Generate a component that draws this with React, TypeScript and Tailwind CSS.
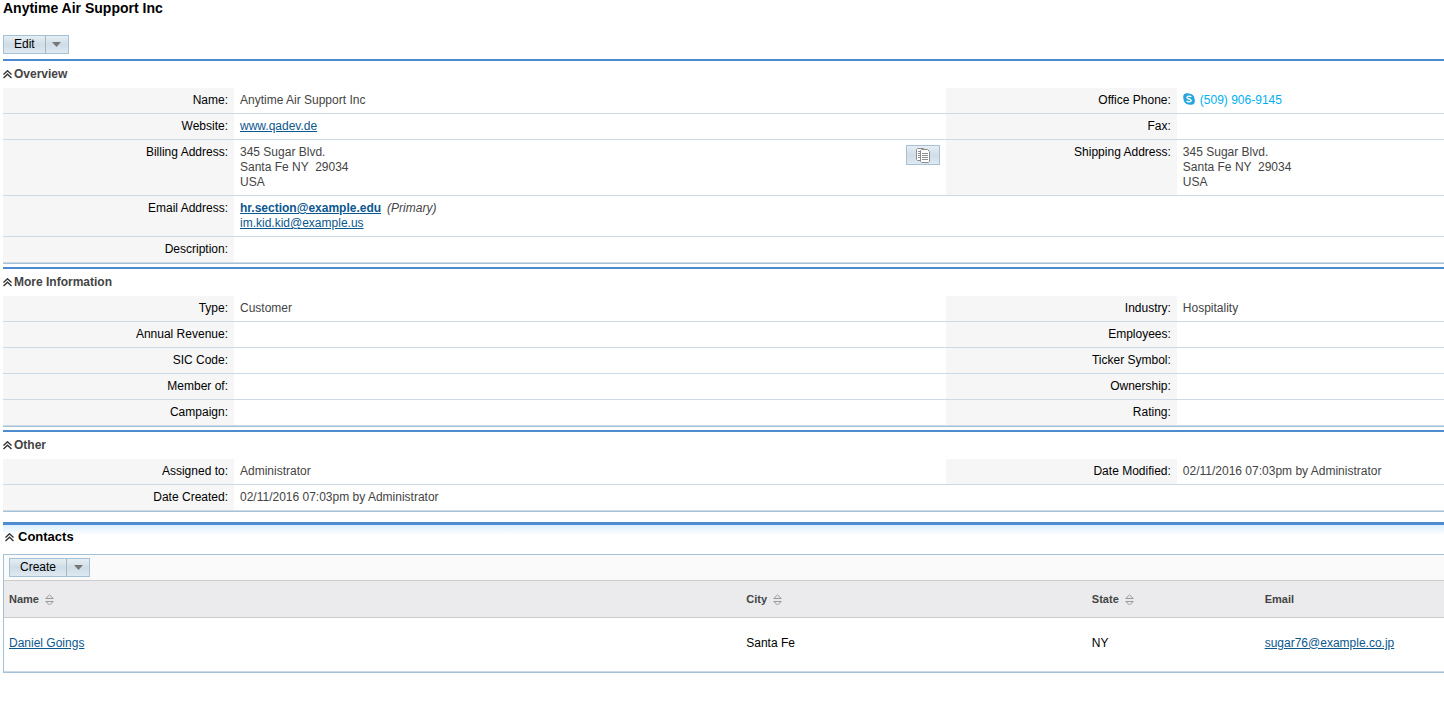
import { ReactNode } from "react";

type Field = { label: string; value?: ReactNode };
type Row = [Field] | [Field, Field];

const linkClass = "text-[#0b578f] underline";

function Chevrons() {
  return (
    <svg width="9" height="9" viewBox="0 0 9 9" fill="none" stroke="#333" strokeWidth="1.4">
      <path d="M0.5 4.5L4.5 0.8L8.5 4.5M0.5 8L4.5 4.3L8.5 8" />
    </svg>
  );
}

function SortIcon() {
  return (
    <svg width="9" height="11" viewBox="0 0 9 11" fill="none" stroke="#999" strokeWidth="1">
      <path d="M0.5 4.5H8.5M1 4.2L4.5 0.9L8 4.2M0.5 7.5H8.5M1 7.8L4.5 11L8 7.8" />
    </svg>
  );
}

function SkypeIcon() {
  return (
    <svg width="12" height="12" viewBox="0 0 12 12">
      <circle cx="3.8" cy="3.8" r="3.6" fill="#27a5dc" />
      <circle cx="8.2" cy="8.2" r="3.6" fill="#27a5dc" />
      <circle cx="6" cy="6" r="5.5" fill="#27a5dc" />
      <path
        d="M8.2 4.1C7.6 2.9 4 2.7 4 4.5C4 6.3 8.2 5.6 8.2 7.5C8.2 9.4 4.3 9.2 3.7 7.8"
        fill="none"
        stroke="#fff"
        strokeWidth="1.4"
      />
    </svg>
  );
}

function CopyIcon() {
  return (
    <svg width="14" height="15" viewBox="0 0 14 15" fill="#fff" stroke="#8c8c8c" strokeWidth="1">
      <path d="M1.5 0.5H7.5L9.5 2.5V12.5H1.5L0.5 11.5V1.5Z" />
      <path d="M2 3.5H4M2 5.5H4M2 7.5H4M2 9.5H4" />
      <path d="M5.5 1.5H11.5L13.5 3.5V13.5L12.5 14.5H5.5L4.5 13.5V2.5Z" />
      <path d="M6 5.5H12M6 7.5H12M6 9.5H12M6 11.5H12" />
    </svg>
  );
}

function SplitButton({ text }: { text: string }) {
  return (
    <div className="inline-flex h-[19px] border border-[#a5c1d8] bg-linear-to-b from-[#e6eef3] via-[#cfdde7] to-[#dfe9f0]">
      <button className="px-[10px] text-[12px] leading-[17px] text-black">{text}</button>
      <button
        aria-label={`${text} options`}
        className="flex w-[23px] items-center justify-center border-l border-[#a9b4bc]"
      >
        <svg width="9" height="5" viewBox="0 0 9 5" fill="#777">
          <path d="M0 0H9L4.5 5Z" />
        </svg>
      </button>
    </div>
  );
}

function Panel({ title, rows }: { title: string; rows: Row[] }) {
  return (
    <section className="mb-[3px] border-t-2 border-[#4e8ccf]">
      <h4 className="flex h-[27px] items-center">
        <button className="flex items-center gap-[2px] font-bold text-[#444]">
          <Chevrons />
          {title}
        </button>
      </h4>
      <table className="w-full table-fixed border-separate border-spacing-0 border-b border-[#a5c1d8]">
        <colgroup>
          <col className="w-[231px]" />
          <col className="w-[49.4%]" />
          <col className="w-[231px]" />
          <col />
        </colgroup>
        <tbody>
          {rows.map((row) => (
            <tr key={row[0].label}>
              {row.map((field) => (
                <FieldCells key={field.label} field={field} span={row.length === 1 ? 3 : 1} />
              ))}
            </tr>
          ))}
        </tbody>
      </table>
    </section>
  );
}

function FieldCells({ field, span }: { field: Field; span: number }) {
  return (
    <>
      <th
        scope="row"
        className="border-b border-[#cbdae6] bg-[#f6f6f6] px-[6px] py-[5px] text-right align-top font-normal text-black"
      >
        {field.label}:
      </th>
      <td colSpan={span} className="border-b border-[#cbdae6] px-[6px] py-[5px] align-top text-[#444]">
        {field.value}
      </td>
    </>
  );
}

const address = (
  <div className="whitespace-pre">
    345 Sugar Blvd.
    <br />
    {"Santa Fe NY  29034"}
    <br />
    USA
  </div>
);

const overview: Row[] = [
  [
    { label: "Name", value: "Anytime Air Support Inc" },
    {
      label: "Office Phone",
      value: (
        <a href="#phone" className="flex items-start gap-[5px] text-[#00aff0]">
          <SkypeIcon />
          (509) 906-9145
        </a>
      ),
    },
  ],
  [
    {
      label: "Website",
      value: (
        <a href="#website" className={linkClass}>
          www.qadev.de
        </a>
      ),
    },
    { label: "Fax" },
  ],
  [
    {
      label: "Billing Address",
      value: (
        <div className="flex items-start justify-between">
          {address}
          <button
            aria-label="Copy address"
            className="flex h-5 w-[34px] items-center justify-center border border-[#a5c1d8] bg-linear-to-b from-[#e6eef3] via-[#cfdde7] to-[#dfe9f0]"
          >
            <CopyIcon />
          </button>
        </div>
      ),
    },
    { label: "Shipping Address", value: address },
  ],
  [
    {
      label: "Email Address",
      value: (
        <>
          <div className="flex gap-[6px]">
            <a href="#email" className={`${linkClass} font-bold`}>
              hr.section@example.edu
            </a>
            <i>(Primary)</i>
          </div>
          <a href="#email2" className={`${linkClass} block w-fit`}>
            im.kid.kid@example.us
          </a>
        </>
      ),
    },
  ],
  [{ label: "Description" }],
];

const moreInformation: Row[] = [
  [
    { label: "Type", value: "Customer" },
    { label: "Industry", value: "Hospitality" },
  ],
  [{ label: "Annual Revenue" }, { label: "Employees" }],
  [{ label: "SIC Code" }, { label: "Ticker Symbol" }],
  [{ label: "Member of" }, { label: "Ownership" }],
  [{ label: "Campaign" }, { label: "Rating" }],
];

const other: Row[] = [
  [
    { label: "Assigned to", value: "Administrator" },
    { label: "Date Modified", value: "02/11/2016 07:03pm by Administrator" },
  ],
  [{ label: "Date Created", value: "02/11/2016 07:03pm by Administrator" }],
];

const columns = [
  { name: "Name", sortable: true, width: "w-[51.2%]" },
  { name: "City", sortable: true, width: "w-[24%]" },
  { name: "State", sortable: true, width: "w-[12%]" },
  { name: "Email", sortable: false, width: "" },
];

function Contacts() {
  return (
    <section className="mt-[10px] border-t-[3px] border-[#4e8ccf]">
      <h3 className="flex h-[29px] items-start bg-linear-to-b from-[#dceffc] to-white to-35% pt-1 pl-[2px]">
        <button className="flex items-center gap-[4px] text-[13px] leading-4 font-bold text-black">
          <Chevrons />
          Contacts
        </button>
      </h3>
      <div className="border-y border-l border-[#a5c1d8]">
        <div className="flex h-[25px] items-center bg-[#fafafa] pl-[5px]">
          <SplitButton text="Create" />
        </div>
        <table className="w-full table-fixed border-b border-[#cbdae6]">
          <thead>
            <tr className="h-[37px] border-y border-[#ccc] bg-[#ebebed] text-left text-[11px] text-[#444]">
              {columns.map((column) => (
                <th key={column.name} scope="col" className={`px-[5px] ${column.width}`}>
                  {column.sortable ? (
                    <button className="flex items-center gap-[6px] font-bold">
                      {column.name}
                      <SortIcon />
                    </button>
                  ) : (
                    column.name
                  )}
                </th>
              ))}
            </tr>
          </thead>
          <tbody>
            <tr className="h-[54px] text-black">
              <td className="px-[5px] pb-[3px]">
                <a href="#contact" className={linkClass}>
                  Daniel Goings
                </a>
              </td>
              <td className="px-[5px] pb-[3px]">Santa Fe</td>
              <td className="px-[5px] pb-[3px]">NY</td>
              <td className="px-[5px] pb-[3px]">
                <a href="#contact-email" className={linkClass}>
                  sugar76@example.co.jp
                </a>
              </td>
            </tr>
          </tbody>
        </table>
      </div>
    </section>
  );
}

export default function App() {
  return (
    <main className="min-h-screen bg-white pl-[3px] font-['Liberation_Sans',Arial,sans-serif] text-[12px] leading-[15px]">
      <h2 className="text-[14px] leading-4 font-bold text-black">Anytime Air Support Inc</h2>
      <div className="flex pt-[19px] pb-[5px]">
        <SplitButton text="Edit" />
      </div>
      <Panel title="Overview" rows={overview} />
      <Panel title="More Information" rows={moreInformation} />
      <Panel title="Other" rows={other} />
      <Contacts />
    </main>
  );
}
